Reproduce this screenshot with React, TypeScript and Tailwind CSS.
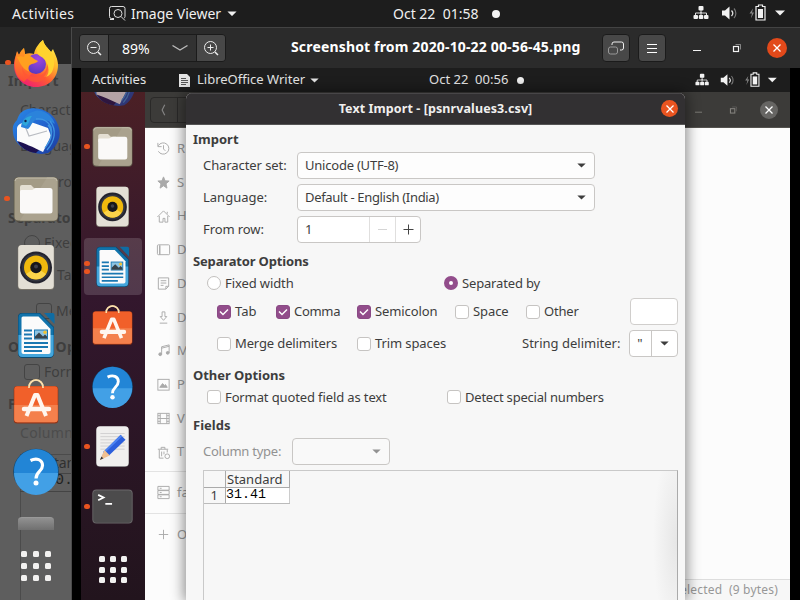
import type { ReactNode } from "react";

type IconProps = { className?: string };

function Firefox({ className }: IconProps) {
  return (
    <svg viewBox="0 0 48 48" className={className}>
      <defs>
        <linearGradient id="ffBody" x1="0.85" y1="0.05" x2="0.25" y2="1">
          <stop offset="0" stopColor="#fff04a" />
          <stop offset="0.35" stopColor="#ffb62a" />
          <stop offset="0.65" stopColor="#ff5a33" />
          <stop offset="1" stopColor="#ee1a78" />
        </linearGradient>
        <linearGradient id="ffEar" x1="0.5" y1="0" x2="0.4" y2="1">
          <stop offset="0" stopColor="#ffa020" />
          <stop offset="1" stopColor="#ff4a38" />
        </linearGradient>
        <radialGradient id="ffGlobe" cx="0.6" cy="0.25" r="0.8">
          <stop offset="0" stopColor="#a246e0" />
          <stop offset="1" stopColor="#5438bd" />
        </radialGradient>
      </defs>
      <path d="M31 1c1 5 5 8 8 12l2-3c2 5 5 10 5 16 0 13-9 22-22 22S2 38 2 26c0-6 2-9 3-14l2 4c2-4 3-5 5-7l1 6c3-1 6-1 9 0 1-6 5-11 9-14z" fill="url(#ffBody)" />
      <path d="M5 13l2 3c2-4 3-5 5-7l1 6c3 0 6 2 8 4l2 12-11 12C2 38 1 26 5 13z" fill="url(#ffEar)" />
      <circle cx="24" cy="25" r="10" fill="url(#ffGlobe)" />
      <path d="M13 15c4 0 6 3 11 6l2 1c-2 3-6 2-8 4-2 1-2 5 0 7-6-2-9-7-11-11l-2-4c3-1 5-1 7 0z" fill="#ffa01f" />
      <path d="M31 1c1 5 5 8 8 12 4 7 4 13 1 20-2 3-5 5-8 5 6-8 4-13 1-17-3-4-8-4-8-9 0-5 4-9 6-11z" fill="#ffd32e" />
      <path d="M10 28c2 8 10 11 16 9 6-1 9-6 9-12 4 8 0 16-9 18-9 1-16-6-16-15z" fill="#ff5734" opacity="0.75" />
    </svg>
  );
}

function Thunderbird({ className }: IconProps) {
  return (
    <svg viewBox="0 0 48 48" className={className}>
      <defs>
        <linearGradient id="tbBlue" x1="0" y1="0" x2="1" y2="1">
          <stop offset="0" stopColor="#2a8ae6" />
          <stop offset="0.5" stopColor="#2263cf" />
          <stop offset="1" stopColor="#1c3a9c" />
        </linearGradient>
      </defs>
      <path d="M13 3C22-1 36 2 43 12c5 8 6 16 3 22-3 7-7 10-10 12l-6 1C15 46 2 38 1 25c-1-6 1-9 4-12 2-6 4-8 8-10z" fill="url(#tbBlue)" />
      <path d="M5 33c3 8 11 12 19 13l6-6-20-6z" fill="#1d1150" />
      <path d="M5 21c1-4 6-6 11-7l20 7 3 8-8 16C21 40 12 36 5 34z" fill="#fbfbfb" />
      <path d="M13 19l4 10 18-5" fill="none" stroke="#b9bcc2" strokeWidth="1.200" />
      <path d="M9 20c1-9 6-14 14-16 8-2 17 4 20 13-7-5-13-3-18-4-4-1-5 5-9 9z" fill="#2b83db" />
      <path d="M10 17c2-6 6-8 10-8-3 3-2 7-6 10z" fill="#2ea7da" />
      <circle cx="13.500" cy="14" r="1.200" fill="#14224e" />
      <path d="M24 12c7-1 12 2 15 8 2 8 0 14-6 21M36 18c5 6 4 14-1 20M38 14c7 9 5 20-3 29" fill="none" stroke="#3f95e0" strokeWidth="1.300" />
    </svg>
  );
}

function Files({ className }: IconProps) {
  return (
    <svg viewBox="0 0 48 48" className={className}>
      <rect x="1.700" y="2" width="44.600" height="44.500" rx="4.500" fill="#615c4d" />
      <rect x="2.500" y="2.500" width="43" height="43" rx="4" fill="#a39b86" />
      <path d="M35 2.500h6.500a4 4 0 0 1 4 4v35a4 4 0 0 1-4 4H8z" fill="#aaa28e" />
      <path d="M3 6a3.500 3.500 0 0 1 3.500-3h35a3.500 3.500 0 0 1 3.500 3" fill="none" stroke="#c3bdad" />
      <path d="M8 12a2 2 0 0 1 2-2h9l3 3h6v6H8z" fill="#e4dfd3" />
      <path d="M8 17c0-2 1-2 3-2h8c3 0 3-2 6-2h13a2.500 2.500 0 0 1 2.500 2.500V36a2.500 2.500 0 0 1-2.500 2.500H10.500A2.500 2.500 0 0 1 8 36z" fill="#faf9f8" />
    </svg>
  );
}

function Rhythmbox({ className }: IconProps) {
  return (
    <svg viewBox="0 0 48 48" className={className}>
      <rect x="5.700" y="2" width="36.600" height="45" rx="4" fill="#7a756b" />
      <rect x="6.200" y="2" width="35.600" height="44" rx="3.500" fill="#e3dfd5" />
      <circle cx="24" cy="24.500" r="16" fill="#23232e" />
      <circle cx="24" cy="24.500" r="14" fill="#343640" />
      <circle cx="24" cy="24.500" r="12" fill="#f0b90d" />
      <path d="M14 31a12 12 0 0 0 20 0L24 24.500z" fill="#fbd44a" />
      <circle cx="24" cy="24.500" r="5.700" fill="#16161b" />
      <circle cx="24" cy="23.500" r="2" fill="#3d3f4b" />
    </svg>
  );
}

function WriterIcon({ className }: IconProps) {
  return (
    <svg viewBox="0 0 48 48" className={className}>
      <path d="M10 2h18l14 14v26.500a4.500 4.500 0 0 1-4.500 4.500h-27A4.500 4.500 0 0 1 6 42.500V6a4 4 0 0 1 4-4z" fill="#0a4a70" />
      <path d="M10 2.500h17.500l14 14V42a4 4 0 0 1-4 4h-27a4 4 0 0 1-4-4V6.500a4 4 0 0 1 4-4z" fill="#1173ab" />
      <path d="M6.500 24h35v18a4 4 0 0 1-4 4h-27a4 4 0 0 1-4-4z" fill="#44a6dc" />
      <path d="M11 5.500h15.500L38.500 18v23a2 2 0 0 1-2 2h-25a2 2 0 0 1-2-2V7a1.500 1.500 0 0 1 1.500-1.500z" fill="#fbfbfb" />
      <path d="M32 2h8.500a2 2 0 0 1 2 2v9z" fill="#0f6ca3" />
      <path d="M12 19.500h8M12 23.500h8M12 27.500h8M12 32h24M12 36h24M12 40h18" stroke="#1a78b2" strokeWidth="1.900" />
      <rect x="22" y="18.500" width="14" height="10" fill="#1a78b2" />
      <rect x="23" y="19.500" width="12" height="8" fill="#8ec4e2" />
      <path d="M23 27.500v-2l4-4 4 4 2-2 2 2v2z" fill="#39434a" />
      <circle cx="33" cy="21.200" r="1.700" fill="#f2c230" />
    </svg>
  );
}

function Software({ className }: IconProps) {
  return (
    <svg viewBox="0 0 48 48" className={className}>
      <path d="M17 12V8a7 7 0 0 1 14 0v4" fill="none" stroke="#f0c987" strokeWidth="1.700" />
      <rect x="1.700" y="7" width="44.600" height="37.500" rx="3.500" fill="#8e3519" />
      <rect x="2.300" y="7.300" width="43.400" height="36" rx="3" fill="#f1602a" />
      <path d="M2.300 26h43.400v14.300a3 3 0 0 1-3 3H5.300a3 3 0 0 1-3-3z" fill="#f4804c" />
      <path d="M17 9V8a7 7 0 0 1 14 0v1" fill="none" stroke="#fae0ae" strokeWidth="1.700" />
      <path d="M14.500 37L23 16h2.500L34 37" fill="none" stroke="#fff6ef" strokeWidth="4" strokeLinejoin="round" />
      <path d="M12 30h25" stroke="#fff6ef" strokeWidth="4.500" strokeLinecap="round" />
    </svg>
  );
}

function Help({ className }: IconProps) {
  return (
    <svg viewBox="0 0 48 48" className={className}>
      <circle cx="24" cy="24.500" r="22.800" fill="#134a74" />
      <circle cx="24" cy="24" r="22" fill="#2285d6" />
      <path d="M2 26h44a22 22 0 0 1-44 0z" fill="#42a0e6" />
      <path d="M18.500 13.500c6-3 12-1 12 5 0 6-6.500 6-6.500 13" fill="none" stroke="#fff" strokeWidth="3.200" />
      <circle cx="24" cy="36" r="2.500" fill="#fff" />
    </svg>
  );
}

function Gedit({ className }: IconProps) {
  return (
    <svg viewBox="0 0 48 48" className={className}>
      <rect x="5.700" y="2" width="36.600" height="45" rx="4.500" fill="#6a676c" />
      <rect x="6" y="1.500" width="36" height="44.500" rx="4" fill="#f0efee" />
      <path d="M10.500 9.500h27M10.500 13h27M10.500 16.500h27M10.500 20h27M10.500 23.500h27M10.500 27h27" stroke="#cfcecf" />
      <path d="M11 37l5-9L33 11l5.500 5.500L20 34z" fill="#2c5fdc" />
      <path d="M14 31L34 12" stroke="#4c83f2" strokeWidth="2" />
      <path d="M10 39l5-11 6 6z" fill="#f1c091" />
      <path d="M10 39l1.500-3.500L14 37z" fill="#333" />
    </svg>
  );
}

function TerminalIcon({ className }: IconProps) {
  return (
    <svg viewBox="0 0 48 48" className={className}>
      <rect x="1.500" y="5" width="45" height="38" rx="4.500" fill="#6a686a" />
      <rect x="2.500" y="6" width="43" height="36" rx="3.500" fill="#4c4b4c" />
      <path d="M8 11l6 3-6 3M16 21h7.500" fill="none" stroke="#fff" strokeWidth="2" />
    </svg>
  );
}

function AppGrid({ gap }: { gap: string }) {
  return (
    <div className={`grid grid-cols-3 ${gap}`}>
      {Array.from({ length: 9 }, (_, i) => (
        <span key={i} className="size-1.5 rounded-[1.5px] bg-[#f2f1f0]" />
      ))}
    </div>
  );
}

function TrayIcons({ className }: IconProps) {
  return (
    <svg viewBox="0 0 94 18" className={className} fill="#f2f2f2">
      <rect x="5.500" y="2" width="5" height="4.500" rx="1" />
      <path d="M8 5v4M2.500 11.500V9h11v2.500M8 8v3" fill="none" stroke="#f2f2f2" strokeWidth="0.900" />
      <rect x="0.500" y="11" width="4.500" height="4" rx="1" />
      <rect x="5.800" y="11" width="4.500" height="4" rx="1" />
      <rect x="11" y="11" width="4.500" height="4" rx="1" />
      <path d="M29 6.500h3L36.500 2.500v13L32 11.500h-3z" />
      <path d="M38.500 6.500a4 4 0 0 1 0 5.500" fill="none" stroke="#e0e0e0" strokeWidth="1.300" />
      <path d="M41 4.500a7 7 0 0 1 0 9.500" fill="none" stroke="#777" strokeWidth="1.200" />
      <path d="M60 4.500l-3.500 5H59l-1.200 5L61 8.500h-2z" fill="#888" />
      <path d="M63 2.500h2.500V1h4v1.500H72V16h-9z" fill="none" stroke="#f2f2f2" strokeWidth="1.200" />
      <rect x="65" y="5" width="5" height="9" />
      <path d="M82 6.500h10l-5 5z" />
    </svg>
  );
}

function Caret({ className }: IconProps) {
  return (
    <svg viewBox="0 0 10 6" className={className}>
      <path d="M0 0.500h10l-5 5z" fill="currentColor" />
    </svg>
  );
}

function Magnifier({ plus }: { plus?: boolean }) {
  return (
    <svg viewBox="0 0 16 16" className="size-4" fill="none" stroke="#eee">
      <circle cx="7.500" cy="7.500" r="6" />
      <path d="M12 12l3 3" strokeWidth="1.500" />
      <path d={plus ? "M4.500 7.500h6M7.500 4.500v6" : "M4.500 7.500h6"} />
    </svg>
  );
}

function WindowButtons({ dim }: { dim?: boolean }) {
  return (
    <svg viewBox="0 0 50 16" className={dim ? "h-[14px] w-[44px] text-[#85837f]" : "h-4 w-[50px] text-[#f3f3f3]"} fill="none" stroke="currentColor">
      <path d="M1 10.500h8" />
      <rect x="41.500" y="6.500" width="5" height="5" strokeWidth="1.200" />
      <path d="M43.500 4.500h5v5" opacity="0.450" />
    </svg>
  );
}

function CloseX() {
  return (
    <svg viewBox="0 0 10 10" className="size-2.5" fill="none" stroke="#fff" strokeWidth="1.300">
      <path d="M1.500 1.500l7 7M8.500 1.500l-7 7" />
    </svg>
  );
}

const dot = "absolute size-[5.5px] rounded-full bg-[#e95420]";

/* Contents of the picture showing faintly through the translucent dock. */
function DockBackdrop() {
  const lines: [string, string][] = [
    ["Import", "left-2 top-[44px] font-bold tracking-[0.3px]"],
    ["Character set:", "left-5 top-[73px]"],
    ["Language:", "left-5 top-[109px]"],
    ["From row:", "left-5 top-[145px]"],
    ["Separator Options", "left-2 top-[181px] font-bold"],
    ["Fixed width", "left-[44px] top-[206px]"],
    ["Tab", "left-[57px] top-[238px]"],
    ["Merge", "left-[56px] top-[274px]"],
    ["Other Options", "left-2 top-[310px] font-bold tracking-[0.5px]"],
    ["Format", "left-[44px] top-[335px]"],
    ["Fields", "left-2 top-[367px] font-bold"],
    ["Column type:", "left-5 top-[396px] !text-[#4c4c4c] tracking-[0.3px]"],
    ["Standard", "left-[46px] top-[426px] !text-[#303030]"],
  ];
  return (
    <div className="absolute inset-0 overflow-hidden bg-[#5e5e5e]">
      <div className="h-[37px] bg-[#262626]" />
      {lines.map(([t, c]) => (
        <span key={t} className={`absolute whitespace-nowrap text-[14px] leading-5 text-[#3e3e3e] ${c}`}>{t}</span>
      ))}
      <span className="absolute left-[46px] top-[446px] font-['Liberation_Mono'] text-[15px] leading-4 text-[#222]">30.</span>
      <span className="absolute left-6 top-[208px] size-4 rounded-full border border-[#444]" />
      <span className="absolute left-9 top-[276px] size-4 rounded-[3px] border border-[#444]" />
      <span className="absolute left-6 top-[337px] size-4 rounded-[3px] border border-[#444]" />
      <div className="absolute left-5 right-0 top-[427px] h-full border-l border-t border-[#4b4b4b]" />
      <div className="absolute left-5 right-0 top-[446px] h-[19px] border-y border-[#444]" />
    </div>
  );
}

function OuterDock() {
  const slot = "relative flex h-[68px] shrink-0 items-center justify-center";
  const icon = "size-12";
  return (
    <aside className="relative h-full w-[72px] shrink-0 overflow-hidden border-r border-[#4a4a4a]">
      <DockBackdrop />
      <nav className="relative flex h-full flex-col pl-px">
        <div className="flex h-[503px] flex-col overflow-hidden pt-[1.5px]">
          <div className={slot}><span className={`${dot} left-1`} /><Firefox className={icon} /></div>
          <div className={slot}><Thunderbird className={icon} /></div>
          <div className={slot}><span className={`${dot} left-[3px]`} /><Files className={icon} /></div>
          <div className={slot}><Rhythmbox className={icon} /></div>
          <div className={slot}><WriterIcon className={icon} /></div>
          <div className={slot}><Software className={icon} /></div>
          <div className={slot}><Help className={icon} /></div>
          <div className="flex justify-center pt-[12px]">
            <div className="h-[14px] w-9 rounded-t-[4px] border-t border-[#999] bg-gradient-to-b from-[#919191] to-[#6d6d6d]" />
          </div>
        </div>
        <div className="flex justify-center pt-[21px]"><AppGrid gap="gap-[6px]" /></div>
      </nav>
    </aside>
  );
}

function InnerDock() {
  const slot = "relative flex h-[60px] w-full shrink-0 items-center justify-center pr-px";
  const icon = "size-[43px]";
  return (
    <aside className="flex h-full w-16 shrink-0 flex-col items-center overflow-hidden bg-gradient-to-b from-[#4b2025] via-[#33172d] via-40% to-[#22141d]">
      <div className="flex h-[24.5px] w-full shrink-0 items-end justify-center overflow-hidden pb-[10px] opacity-60"><Thunderbird className="size-[43px] shrink-0" /></div>
      <div className={slot}><span className={`${dot} left-[3px]`} /><Files className={icon} /></div>
      <div className={slot}><Rhythmbox className={icon} /></div>
      <div className={slot}>
        <span className="absolute inset-x-[3px] inset-y-[1.5px] rounded-[4px] bg-white/15" />
        <span className={`${dot} left-[3px] top-[24px]`} />
        <span className={`${dot} left-[3px] top-[32px]`} />
        <WriterIcon className="relative size-[43px]" />
      </div>
      <div className={slot}><Software className={icon} /></div>
      <div className={slot}><Help className={icon} /></div>
      <div className={slot}><span className={`${dot} left-[3px]`} /><Gedit className={icon} /></div>
      <div className={slot}><span className={`${dot} left-[3px]`} /><TerminalIcon className={icon} /></div>
      <div className="pt-[19.5px]"><AppGrid gap="gap-[4.6px]" /></div>
    </aside>
  );
}

const places: [string, ReactNode][] = [
  ["R", <><path d="M2.500 5a6 6 0 1 1 0 6M2 2v4h4" /><path d="M8 4.500V8.500l2 2" /></>],
  ["S", <path d="M8 2l1.700 4.200 4.300.2-3.300 3 1 4.600L8 11.500 4.300 14l1-4.600L2 6.400l4.300-.2z" fill="#aaa" />],
  ["H", <path d="M1.500 8.500L8 2l6.500 6.500M3.500 7.500V14h4v-4h2v4h3V7.500M12 5V3" />],
  ["D", <><rect x="1.500" y="3" width="13" height="10.500" rx="1" /><path d="M4 3.500v10" strokeWidth="1.500" /></>],
  ["D", <><path d="M2.500 2h11v9l-3 3h-8zM10.500 14v-3h3M5 5h6M5 7.500h6M5 10h3" /></>],
  ["D", <path d="M6.500 2h3v5h2L8 11 4.500 7h2zM4 14h8" />],
  ["M", <><path d="M6 12V4l8-2v8.500M6 5.500l8-2" /><circle cx="4.500" cy="12" r="1.500" fill="#aaa" /><circle cx="12.500" cy="10.500" r="1.500" fill="#aaa" /></>],
  ["P", <><rect x="2" y="2.500" width="12" height="11.500" /><path d="M4 11l3-4 2 2 1-1 2 3z" fill="#aaa" /></>],
  ["V", <><rect x="2" y="2.500" width="12" height="11" /><path d="M4.500 2.500v11M11.500 2.500v11M2 5h2.500M2 8h12M2 11h2.500M11.500 5H14M11.500 11H14" /></>],
  ["T", <><path d="M2 4.500h11M5.500 4.500v-2h4v2M3.500 5v9H8M12 5v3M6 7v5M8.500 7v3" /><circle cx="12" cy="12" r="2.500" /></>],
];

function PlaceRow({ label, children }: { label: string; children: ReactNode }) {
  return (
    <div className="flex h-[33.7px] shrink-0 items-center whitespace-nowrap pl-[11px]">
      <svg viewBox="0 0 16 16" className="mr-[6px] size-[15px] shrink-0" fill="none" stroke="#aaa">{children}</svg>
      <span className="text-[13px] text-[#9b9b9b]">{label}</span>
    </div>
  );
}

function FileManager() {
  return (
    <section className="flex min-w-0 flex-1 flex-col bg-[#fcfcfc]">
      <header className="flex h-9 shrink-0 items-center justify-between border-b border-[#55534f] bg-[#3c3b39] pl-[5px] pr-3">
        <div className="flex h-[26px] w-[52px] items-center rounded-[4px] border border-[#2a2928] pl-2">
          <svg viewBox="0 0 8 16" className="h-[14px] w-2" fill="none" stroke="#858585" strokeWidth="1.300"><path d="M6 2L3 8l3 6" /></svg>
          <span className="ml-[10px] h-full w-px bg-[#2a2928]" />
        </div>
        <div className="flex items-center gap-[22px]">
          <WindowButtons dim />
          <span className="flex size-[18px] items-center justify-center rounded-full bg-[#666563]"><CloseX /></span>
        </div>
      </header>
      <div className="flex min-h-0 flex-1 justify-between">
        <div className="flex w-[60px] flex-col pt-[4px]">
          {places.map(([label, art], i) => <PlaceRow key={i} label={label}>{art}</PlaceRow>)}
          <div className="mt-[2px] flex h-[43px] shrink-0 items-center border-y border-[#e3e3e3]">
            <PlaceRow label="fa"><path d="M2 1.500h12v4H2zM2 6h12v4H2zM2 10.500h12v4H2zM4 3.500h2M4 8h2M4 12.500h2" /></PlaceRow>
          </div>
          <div className="pt-[4px]">
            <PlaceRow label="O"><path d="M3 8h10M8 3v10" /></PlaceRow>
          </div>
        </div>
        <footer className="flex h-[21px] w-[105px] items-center justify-end self-end whitespace-pre border-t border-[#ddd] bg-[#f7f7f7] pr-3 text-[12px] tracking-[0.2px] text-[#979797]">
          {"selected  (9 bytes)"}
        </footer>
      </div>
    </section>
  );
}

function Check({ on }: { on?: boolean }) {
  return (
    <span className={`flex size-[14px] shrink-0 items-center justify-center rounded-[3px] border ${on ? "border-[#8a4a85] bg-[#924d8b]" : "border-[#c6c4c2] bg-white"}`}>
      {on && <svg viewBox="0 0 12 12" className="size-3 shrink-0" fill="none" stroke="#fff" strokeWidth="1.500"><path d="M2 5.500l3 3 5-5" /></svg>}
    </span>
  );
}

function Option({ label, on, width, track = "" }: { label: string; on?: boolean; width: string; track?: string }) {
  return (
    <label className={`flex shrink-0 items-center gap-[4px] whitespace-nowrap ${width}`}>
      <Check on={on} />
      <span className={track}>{label}</span>
    </label>
  );
}

function Dropdown({ value, width, disabled, track = "" }: { value: string; width: string; disabled?: boolean; track?: string }) {
  return (
    <div className={`flex h-[27px] items-center justify-between rounded-[4px] border border-[#c9c7c5] pl-[7px] pr-2 ${disabled ? "bg-[#f9f9f9] text-[#929292]" : "bg-[#fdfdfd] text-[#3d3d3d]"} ${width}`}>
      <span className={track}>{value}</span>
      <Caret className="h-[5px] w-[9px]" />
    </div>
  );
}

function Title({ children, className = "" }: { children: ReactNode; className?: string }) {
  return <h2 className={`-ml-[10px] flex h-[26px] shrink-0 items-center font-bold ${className}`}>{children}</h2>;
}

function ImportDialog() {
  return (
    <section className="absolute bottom-0 left-[105px] top-[1px] flex w-[499px] flex-col overflow-hidden rounded-t-[6px] bg-[#f7f7f7] text-[13px] leading-none text-[#3d3d3d] shadow-[0_0_14px_2px_rgba(0,0,0,0.45)]">
      <header className="relative flex h-8 shrink-0 items-center justify-center border-b border-t border-b-[#555] border-t-[#484648] bg-[#323032] text-[12.5px] font-bold tracking-[0.1px] text-[#f0efee]">
        Text Import - [psnrvalues3.csv]
        <span className="absolute right-[7px] top-[6px] flex size-[17px] items-center justify-center rounded-full bg-[#e95420]"><CloseX /></span>
      </header>
      <div className="flex min-h-0 flex-1 flex-col pl-[17px] pr-[7px]">
        <Title className="h-[27px] pt-[2px]">Import</Title>
        <div className="mb-[5px] flex items-center"><span className="w-[94px] tracking-[-0.08px]">Character set:</span><Dropdown value="Unicode (UTF-8)" width="w-[298px]" track="tracking-[-0.22px]" /></div>
        <div className="mb-[5px] flex items-center"><span className="w-[94px]">Language:</span><Dropdown value="Default - English (India)" width="w-[298px]" track="tracking-[-0.33px]" /></div>
        <div className="flex items-center">
          <span className="w-[94px] tracking-[-0.1px]">From row:</span>
          <div className="flex h-[27px] w-[124px] items-center rounded-[4px] border border-[#c9c7c5] bg-white">
            <span className="flex-1 pl-[7px]">1</span>
            <span className="flex h-full w-[26px] items-center justify-center border-l border-[#e0dfde]"><i className="h-px w-[9px] bg-[#d5d5d5]" /></span>
            <span className="flex h-full w-[25px] items-center justify-center border-l border-[#e0dfde]">
              <svg viewBox="0 0 11 11" className="size-[11px]" stroke="#444"><path d="M0.500 5.500h10M5.500 0.500v10" /></svg>
            </span>
          </div>
        </div>
        <Title className="mt-[5px] tracking-[-0.16px]">Separator Options</Title>
        <div className="flex h-[18px] shrink-0 items-center pl-1">
          <label className="flex w-[237px] items-center gap-[4px] tracking-[-0.1px]"><span className="size-[14px] rounded-full border border-[#c2c0be] bg-white" />Fixed width</label>
          <label className="flex items-center gap-[4px] tracking-[-0.16px]"><span className="size-[14px] rounded-full border-[5px] border-[#924d8b] bg-white" />Separated by</label>
        </div>
        <div className="mt-[6px] flex h-[27px] shrink-0 items-center pl-[14px]">
          <Option label="Tab" on width="w-[59px]" />
          <Option label="Comma" on width="w-[81px]" track="tracking-[-0.3px]" />
          <Option label="Semicolon" on width="w-[98px]" track="tracking-[-0.1px]" />
          <Option label="Space" width="w-[71px]" track="tracking-[-0.1px]" />
          <Option label="Other" width="w-[104px]" track="tracking-[-0.2px]" />
          <span className="h-[27px] w-[48px] rounded-[4px] border border-[#d0cecc] bg-white" />
        </div>
        <div className="mt-[5px] flex h-[27px] shrink-0 items-center pl-[14px]">
          <Option label="Merge delimiters" width="w-[140px]" track="tracking-[-0.13px]" />
          <Option label="Trim spaces" width="w-[165px]" track="tracking-[-0.1px]" />
          <span className="w-[108px] whitespace-nowrap">String delimiter:</span>
          <div className="flex h-[27px] w-[49px] items-center rounded-[4px] border border-[#c9c7c5] bg-white">
            <span className="flex-1 pl-[7px]">&quot;</span>
            <span className="flex h-full w-[26px] items-center justify-center border-l border-[#c9c7c5]"><Caret className="h-[5px] w-[9px]" /></span>
          </div>
        </div>
        <Title className="mt-[5px] tracking-[-0.04px]">Other Options</Title>
        <div className="flex h-[18px] shrink-0 items-center pl-1">
          <Option label="Format quoted field as text" width="w-[240px]" track="tracking-[-0.12px]" />
          <Option label="Detect special numbers" width="w-auto" track="tracking-[-0.22px]" />
        </div>
        <Title className="mt-[6px] h-[25px]">Fields</Title>
        <div className="flex shrink-0 items-center"><span className="w-[89px] text-[#929292] tracking-[-0.25px]">Column type:</span><Dropdown value="" width="w-[98px]" disabled /></div>
        <div className="mt-[5px] flex min-h-0 flex-1 border border-b-0 border-[#c9c9c9] border-r-[#aaa] bg-[radial-gradient(ellipse_24px_100px_at_100%_70px,#e6e6e6,transparent)]">
          <div className="w-[86px]">
            <div className="flex h-[17px] border-b border-[#aaa]">
              <span className="w-[22px] border-r border-[#aaa]" />
              <span className="flex flex-1 items-center whitespace-nowrap border-r border-[#aaa] pl-px">Standard</span>
            </div>
            <div className="flex h-4 border-b border-[#bbb]">
              <span className="flex w-[22px] items-center justify-end border-r border-[#aaa] pr-[7px]">1</span>
              <span className="flex-1 border-r border-[#ccc] bg-white font-['Liberation_Mono'] text-[13.3px] leading-[14px] text-black">31.41</span>
            </div>
          </div>
        </div>
      </div>
    </section>
  );
}

function Screenshot() {
  return (
    <div className="flex h-[532px] w-[709px] flex-col overflow-hidden bg-black">
      <header className="relative flex h-6 shrink-0 items-center bg-[#1d1d1d] text-[13px] text-[#e4e4e4]">
        <span className="ml-[11px] w-[87px]">Activities</span>
        <svg viewBox="0 0 11 13" className="h-[13px] w-[11px]"><path d="M0 0h8l3 3v10H0z" fill="#e4e4e4" /><path d="M2 4.500h5M2 6.500h7M2 8.500h7M2 10.500h5" stroke="#555" /></svg>
        <span className="ml-[7px]">LibreOffice Writer</span>
        <Caret className="ml-[5px] h-[5px] w-[9px]" />
        <span className="absolute left-[348px] whitespace-pre">{"Oct 22  00:56"}</span>
        <span className="absolute left-[436px] size-[7px] rounded-full bg-[#eee]" />
        <TrayIcons className="absolute left-[614px] top-[4px] h-4 w-[83.500px]" />
      </header>
      <div className="relative flex min-h-0 flex-1">
        <InnerDock />
        <FileManager />
        <ImportDialog />
      </div>
    </div>
  );
}

function ViewerToolbar() {
  const button = "flex items-center justify-center bg-[#484848]";
  return (
    <header className="relative flex h-[41px] shrink-0 items-center border-t border-[#434343] bg-[#2b2b2b] text-[14px] text-white">
      <div className="ml-[7px] flex h-7 w-[147px] overflow-hidden rounded-[4px] border border-[#1b1b1b]">
        <span className={`${button} w-7`}><Magnifier /></span>
        <div className="flex flex-1 items-center border-x border-[#1b1b1b] bg-[#323232] pl-[13px]">
          <span className="w-[50px] text-[14px]">89%</span>
          <svg viewBox="0 0 16 6" className="h-[6px] w-4" fill="none" stroke="#bbb" strokeWidth="1.300"><path d="M0.500 0.500L8 5l7.500-4.500" /></svg>
        </div>
        <span className={`${button} w-7`}><Magnifier plus /></span>
      </div>
      <h1 className="absolute left-[219px] top-[8px] whitespace-nowrap text-[14px] font-bold tracking-[0.16px]">Screenshot from 2020-10-22 00-56-45.png</h1>
      <div className="ml-auto flex items-center pr-[13px]">
        <span className={`${button} mr-2 size-7 rounded-[4px] border border-[#1b1b1b]`}>
          <svg viewBox="0 0 16 14" className="h-[14px] w-4 shrink-0" fill="none" stroke="#eee"><path d="M4 4V3a2 2 0 0 1 2-2h7.500a2 2 0 0 1 2 2v4a2 2 0 0 1-2 2H12" /><rect x="0.500" y="6" width="9" height="7" rx="2" stroke="#999" /></svg>
        </span>
        <span className={`${button} size-7 rounded-[4px] border border-[#1b1b1b]`}>
          <svg viewBox="0 0 10 10" className="size-2.5 shrink-0" stroke="#fff"><path d="M0 1.500h10M0 5.500h10M0 9.500h10" /></svg>
        </span>
        <span className="ml-[26px] mr-[25px]"><WindowButtons /></span>
        <span className="flex size-5 items-center justify-center rounded-full bg-[#e2491a]"><CloseX /></span>
      </div>
    </header>
  );
}

export default function App() {
  return (
    <main className="flex h-[600px] w-[800px] flex-col overflow-hidden bg-black font-['Noto_Sans',sans-serif]">
      <header className="relative flex h-[27px] shrink-0 items-center bg-[#1d1d1d] text-[14px] text-[#f0f0f0]">
        <span className="ml-3 w-[97px] tracking-[0.4px]">Activities</span>
        <svg viewBox="0 0 17 15" className="h-[15px] w-[17px]" fill="none" stroke="#ddd">
          <path d="M5 12.500H2.500a2 2 0 0 1-2-2v-8a2 2 0 0 1 2-2h11.500a2 2 0 0 1 2 2v8a2 2 0 0 1-1 1.700M1 13.500h4" />
          <circle cx="9" cy="7.500" r="4" /><path d="M12 10.500l4 4" />
        </svg>
        <span className="ml-[5px]">Image Viewer</span>
        <Caret className="ml-[6px] h-[5.500px] w-[10px]" />
        <span className="absolute left-[393px] whitespace-pre">{"Oct 22  01:58"}</span>
        <span className="absolute left-[492px] size-2 rounded-full bg-[#f3f3f3]" />
        <TrayIcons className="absolute left-[693px] top-[4px] h-[18px] w-[94px]" />
      </header>
      <div className="flex min-h-0 flex-1">
        <OuterDock />
        <section className="flex min-w-0 flex-1 flex-col">
          <ViewerToolbar />
          <div className="flex justify-start pl-[9px]"><Screenshot /></div>
        </section>
      </div>
    </main>
  );
}
